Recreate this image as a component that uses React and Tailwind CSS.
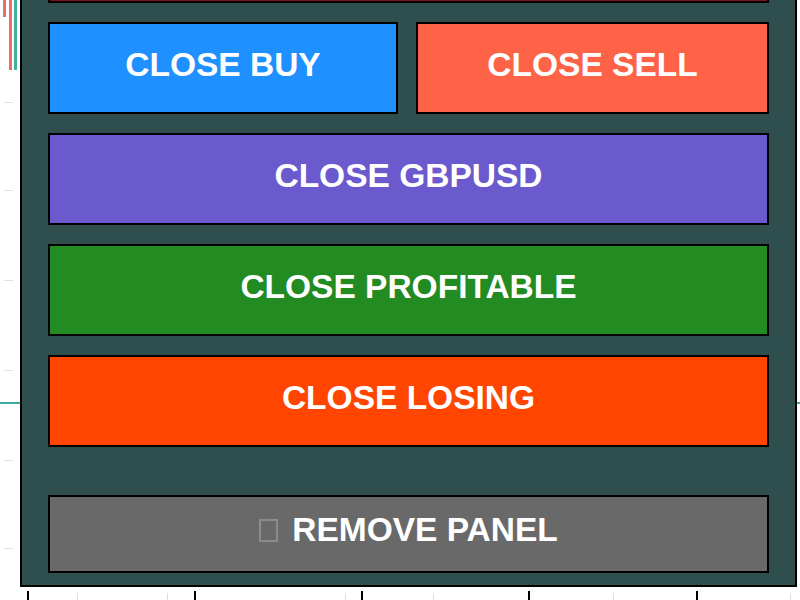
export default function App() {
  const majorTicks = [27, 194, 361, 528, 696]
  const minorTicks = [77, 167, 345, 433, 613, 790]
  const priceTicks = [102, 190, 280, 370, 460, 548]

  return (
    <div className="relative w-[800px] h-[600px] overflow-hidden bg-white font-['Liberation_Sans',Arial,sans-serif]">
      {/* chart behind the panel */}
      <div className="absolute left-[3px] top-0 w-[3px] h-[17px] bg-[#ec6b6b]" />
      <div className="absolute left-[9px] top-0 w-[3px] h-[70px] bg-[#ec6b6b]" />
      <div className="absolute left-[14px] top-0 w-[3px] h-[70px] bg-[#3fb29a]" />
      {priceTicks.map((y) => (
        <div key={y} className="absolute left-[4px] w-[9px] h-px bg-[#e2e2e2]" style={{ top: y }} />
      ))}
      <div className="absolute left-0 top-[402px] w-[22px] h-[2px] bg-[#3aa9a0]" />
      <div className="absolute right-0 top-[402px] w-[4px] h-[2px] bg-[#3aa9a0]" />
      {majorTicks.map((x) => (
        <div key={x} className="absolute top-[591px] w-[2px] h-[9px] bg-black" style={{ left: x }} />
      ))}
      {minorTicks.map((x) => (
        <div key={x} className="absolute top-[593px] w-px h-[7px] bg-[#dddddd]" style={{ left: x }} />
      ))}

      {/* trade panel */}
      <div className="relative ml-[20px] -mt-[103px] w-[777px] border-2 border-black bg-[#2F4F4F] px-[26px] pt-[12px] pb-[12px] flex flex-col gap-[19px]">
        <Btn color="bg-[#7d0f1e]" label="" />
        <div className="grid grid-cols-[350px_1fr] gap-[18px]">
          <Btn color="bg-[#1E90FF]" label="CLOSE BUY" />
          <Btn color="bg-[#FF6347]" label="CLOSE SELL" />
        </div>
        <Btn color="bg-[#6A5ACD]" label="CLOSE GBPUSD" />
        <Btn color="bg-[#228B22]" label="CLOSE PROFITABLE" />
        <Btn color="bg-[#FF4500]" label="CLOSE LOSING" />
        <button className="mt-[29px] h-[78px] border-2 border-black bg-[#696969] flex items-center justify-center pb-[9px] text-white font-bold text-[33.5px] leading-none">
          <span className="inline-block w-[19px] h-[23px] border-2 border-[#8c8c8c] mr-[14px] mt-[2px]" />
          REMOVE PANEL
        </button>
      </div>
    </div>
  )
}

function Btn({ color, label }) {
  return (
    <button className={`h-[92px] w-full border-2 border-black ${color} flex items-center justify-center pb-[7px] text-white font-bold text-[33.5px] leading-none`}>
      {label}
    </button>
  )
}
